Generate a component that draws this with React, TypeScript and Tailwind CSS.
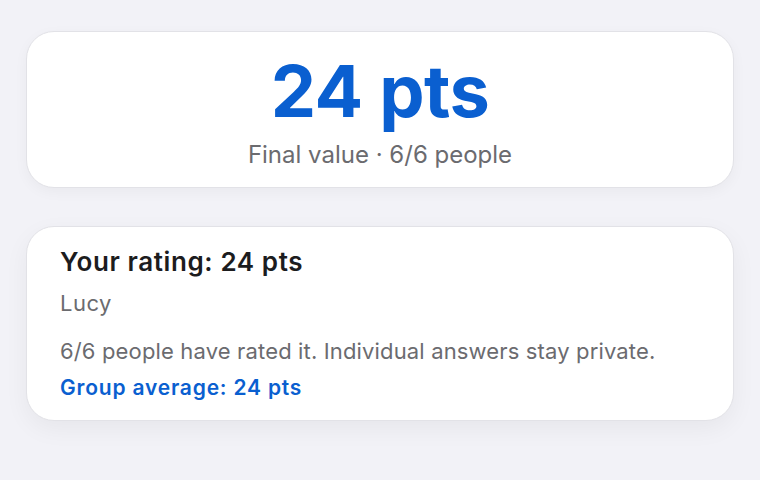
export default function App() {
  return (
    <div
      className="min-h-[480px] w-full bg-[#f2f2f7] px-[26px] pt-[31px] pb-10 flex flex-col gap-[38px]"
      style={{ fontFamily: "Inter, 'Noto Sans', sans-serif" }}
    >
      <section className="rounded-[28px] border border-[#e2e2e7] bg-white shadow-[0_4px_14px_rgba(0,0,0,0.04)] pt-[23px] pb-[18px] flex flex-col items-center">
        <div className="text-[72px] leading-none font-bold text-[#0a5fd0] tracking-[-0.5px]">24 pts</div>
        <div className="mt-[14px] text-[24px] leading-[28px] text-[#6b6b6f]">Final value · 6/6 people</div>
      </section>

      <section className="rounded-[28px] border border-[#e2e2e7] bg-white shadow-[0_8px_24px_rgba(0,0,0,0.05)] px-[33px] pt-[19px] pb-[18px] flex flex-col">
        <div className="text-[26px] leading-[32px] font-semibold tracking-[0.6px] text-[#1c1c1e]">Your rating: 24 pts</div>
        <div className="mt-[11px] text-[22px] leading-[28px] tracking-[0.5px] text-[#6b6b6f]">Lucy</div>
        <div className="mt-[20px] text-[22px] leading-[28px] tracking-[0.15px] text-[#6b6b6f]">6/6 people have rated it. Individual answers stay private.</div>
        <div className="mt-[9px] text-[21px] leading-[28px] font-semibold tracking-[0.8px] text-[#0a5fd0]">Group average: 24 pts</div>
      </section>
    </div>
  );
}
